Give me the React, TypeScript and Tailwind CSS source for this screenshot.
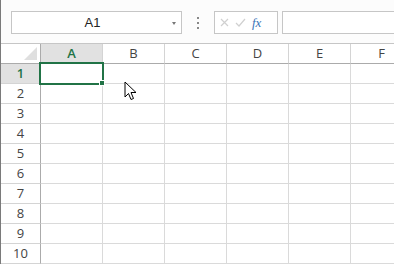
import React from "react";

const cols = ["A", "B", "C", "D", "E", "F"];
const rows = [1, 2, 3, 4, 5, 6, 7, 8, 9, 10];

function Cursor() {
  return (
    <svg
      className="absolute left-[123px] top-[81px]"
      width="14"
      height="21"
      viewBox="0 0 14 21"
    >
      <path
        d="M1 1 L1 16 L4.5 12.5 L7 18.5 L9.5 17.5 L7 11.5 L12 11.5 Z"
        fill="#fff"
        stroke="#000"
        strokeWidth="1"
      />
    </svg>
  );
}

export default function App() {
  return (
    <div
      className="relative w-[394px] h-[264px] overflow-hidden bg-white border-l border-[#7a7a7a]"
      style={{ fontFamily: '"Open Sans", "Noto Sans", sans-serif' }}
    >
      {/* formula bar */}
      <div className="h-[44px] flex items-start pt-[11px] pl-[10px] border-b border-[#c6c6c6] bg-[#fcfcfc]">
        <div className="w-[171px] h-[23px] border border-[#c6c6c6] bg-white flex items-center relative">
          <span
            className="flex-1 text-center text-[13px] text-[#222] pr-2"
            style={{ fontFamily: '"Liberation Sans", Arial, sans-serif' }}
          >
            A1
          </span>
          <span className="absolute right-[5px] top-[10px] w-0 h-0 border-l-[2.5px] border-r-[2.5px] border-t-[3px] border-l-transparent border-r-transparent border-t-[#777]" />
        </div>
        <div className="w-[32px] h-[23px] flex flex-col items-center justify-center gap-[3px]">
          <span className="w-[2px] h-[2px] bg-[#888]" />
          <span className="w-[2px] h-[2px] bg-[#888]" />
          <span className="w-[2px] h-[2px] bg-[#888]" />
        </div>
        <div className="w-[64px] h-[23px] border border-[#c6c6c6] bg-white flex items-center pl-[5px] gap-[6px]">
          <svg width="9" height="9" viewBox="0 0 9 9">
            <path d="M1 1 L8 8 M8 1 L1 8" stroke="#d0d0d0" strokeWidth="1.2" />
          </svg>
          <svg width="11" height="9" viewBox="0 0 11 9">
            <path d="M1 5 L4 8 L10 1" stroke="#d0d0d0" strokeWidth="1.2" fill="none" />
          </svg>
          <span
            className="text-[13px] italic text-[#3a74b7] leading-none"
            style={{ fontFamily: '"Liberation Serif", "Times New Roman", serif' }}
          >
            fx
          </span>
        </div>
        <div className="ml-[4px] flex-1 h-[23px] border border-r-0 border-[#c6c6c6] bg-white" />
      </div>

      {/* grid */}
      <div className="grid grid-cols-[40px_62px_62px_62px_62px_62px_62px] auto-rows-[20px]">
        <div className="relative border-r border-b border-[#ababab] bg-white">
          <svg className="absolute right-[3px] bottom-[3px]" width="13" height="13" viewBox="0 0 13 13">
            <path d="M13 0 L13 13 L0 13 Z" fill="#dfdfdf" />
          </svg>
        </div>
        {cols.map((c) => (
          <div
            key={c}
            className={
              c === "A"
                ? "flex items-center justify-center border-r border-b border-[#d4d4d4] border-b-[#ababab] bg-[#e1e1e1] text-[13px] font-semibold text-[#217346]"
                : "flex items-center justify-center border-r border-b border-[#d4d4d4] border-b-[#ababab] bg-white text-[13px] text-[#444]"
            }
          >
            {c}
          </div>
        ))}
        {rows.map((r) => (
          <React.Fragment key={r}>
            <div
              className={
                r === 1
                  ? "flex items-center justify-center border-r border-b border-[#d4d4d4] border-r-[#ababab] bg-[#e1e1e1] text-[13px] font-semibold text-[#217346]"
                  : "flex items-center justify-center border-r border-b border-[#d4d4d4] border-r-[#ababab] bg-white text-[13px] text-[#444]"
              }
            >
              {r}
            </div>
            {cols.map((c) => (
              <div key={c} className="relative border-r border-b border-[#dadada] bg-white">
                {r === 1 && c === "A" && (
                  <div className="absolute -left-[2px] -top-[2px] w-[65px] h-[23px] border-2 border-[#217346] z-10">
                    <span className="absolute -right-[3px] -bottom-[3px] w-[6px] h-[6px] bg-[#217346] border border-white" />
                  </div>
                )}
              </div>
            ))}
          </React.Fragment>
        ))}
      </div>

      <Cursor />
    </div>
  );
}
